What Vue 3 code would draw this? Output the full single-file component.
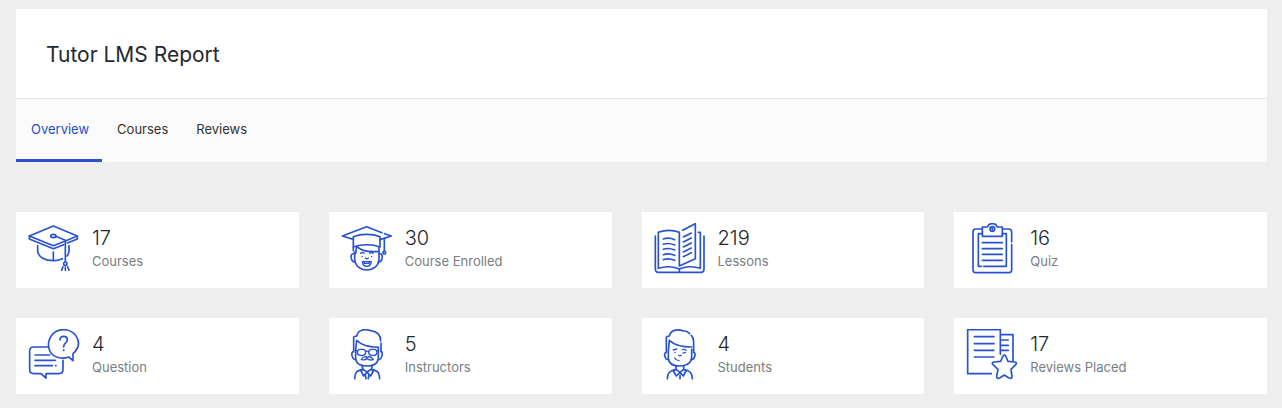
<script setup>
import { ref } from 'vue'

const tabs = ['Overview', 'Courses', 'Reviews']
const active = ref('Overview')

const stats = [
  { icon: 'cap', value: 17, label: 'Courses', box: '36 33 156 156' },
  { icon: 'graduate', value: 30, label: 'Course Enrolled', box: '33 33 156 156' },
  { icon: 'book', value: 219, label: 'Lessons', box: '36 33 156 156' },
  { icon: 'clipboard', value: 16, label: 'Quiz', box: '33 33 156 156' },
  { icon: 'question', value: 4, label: 'Question', box: '36 33 156 156' },
  { icon: 'instructor', value: 5, label: 'Instructors', box: '33 33 156 156' },
  { icon: 'student', value: 4, label: 'Students', box: '36 33 156 156' },
  { icon: 'review', value: 17, label: 'Reviews Placed', box: '33 33 156 156' },
]
</script>

<template>
  <main class="report">
    <header class="head">
      <h1>Tutor LMS Report</h1>
    </header>
    <nav class="tabs">
      <a
        v-for="tab in tabs"
        :key="tab"
        href="#"
        :class="{ active: tab === active }"
        @click.prevent="active = tab"
      >{{ tab }}</a>
    </nav>

    <section class="stats">
      <article v-for="s in stats" :key="s.label" class="card">
        <svg class="icon" :viewBox="s.box" aria-hidden="true">
          <g v-if="s.icon === 'cap'">
            <path d="M40 72 112 42 184 72 148 87 112 101Z" />
            <path d="M40 72V81L112 110 143 98M154 93 184 81V72" />
            <ellipse cx="112" cy="72" rx="8" ry="5" />
            <path d="M119 73 148 85V149" />
            <path d="M65 101V118C68 136 87 146 112 146 123 146 132 144 139 140M159 101V118C158 124 156 129 153 132M112 120V145" />
            <circle cx="148" cy="155" r="5" />
            <path d="M141 164 137 175M148 165V175M155 164 159 175" />
          </g>

          <g v-else-if="s.icon === 'graduate'">
            <path d="M70 82 37 72 110 44 156 62M164 65 184 72 150 83" />
            <path d="M70 105V74C94 65 127 65 150 74V105M70 105C94 96 127 96 150 105" />
            <path d="M163 79V116" />
            <circle cx="163" cy="122" r="4" />
            <path d="M70 105V116M74 120V140C75 163 92 174 110 174 129 174 146 163 147 140V106M77 124 80 103C92 115 113 121 146 118" />
            <path d="M71 125C63 126 62 132 64 140 66 147 70 150 76 150M149 125C157 126 158 132 156 140 154 147 150 150 145 150" />
            <g class="fine">
              <path d="M92 124C96 120 99 121 102 124M119 124C122 121 126 121 129 124M106 138C109 141 112 141 115 138" />
              <path d="M96 133V134M125 133V134" />
              <path d="M97 149H124C123 158 118 163 110 163 103 163 98 158 97 149ZM103 150V154H118V150" />
            </g>
          </g>

          <g v-else-if="s.icon === 'book'">
            <path d="M49 169V61C68 54 94 54 112 61V162L160 140V35L122 55" />
            <path d="M49 169C70 162 96 163 112 171 128 163 155 162 175 169V61H169M112 171V181" />
            <path d="M40 72V171Q40 181 49 181H177Q186 181 186 171V72" />
            <path d="M64 81C75 77 87 78 98 83M64 97C75 93 87 94 98 99M64 112C75 108 87 109 98 114M64 128C75 124 87 125 98 130M64 143C75 139 87 140 98 145" />
            <path d="M124 75 148 63M124 90 148 78M124 105 148 93M124 120 148 108M124 134 148 122" />
          </g>

          <g v-else-if="s.icon === 'clipboard'">
            <path d="M82 51H62Q54 51 54 59V173Q54 182 63 182H161Q170 182 170 173V98M170 90V60Q170 51 161 51H142" />
            <path d="M82 73V45H98C99 38 105 35 112 35 119 35 125 38 126 45H142V73Z" />
            <circle cx="112" cy="51" r="7" />
            <path d="M112 49V53" />
            <path d="M82 65H70V163H79M86 163H154V65H142" />
            <path d="M82 92H142M82 110H142M82 127H142M82 145H142" />
          </g>

          <g v-else-if="s.icon === 'question'">
            <path d="M171 128 158 117C138 125 113 119 102 100 92 80 99 54 119 41 140 29 168 35 181 55 192 73 188 92 171 107Z" />
            <path d="M132 66C132 58 137 55 143 55 149 55 154 59 154 65 154 70 151 74 147 77 144 80 143 82 143 87" />
            <circle class="solid" cx="143" cy="97" r="3" />
            <path d="M95 87H53Q41 87 41 99V154Q41 167 53 167H75L90 180V167H129Q141 167 141 154V127" />
            <path d="M57 111H101M57 127H118M57 143H109M119 143H120" />
          </g>

          <g v-else-if="s.icon === 'instructor'">
            <path d="M71 99V57Q72 54 80 54C84 35 103 32 122 38 139 40 152 50 152 69M153 75V100M77 97 80 67C96 82 113 86 145 88V123C142 138 129 144 111 144 93 144 80 139 77 124V97" />
            <path d="M71 101C65 101 65 107 66 113 68 121 70 125 77 125M153 101C158 101 157 107 156 113 154 121 152 125 145 125" />
            <g class="fine">
              <rect x="82" y="94" width="25" height="18" rx="9" />
              <rect x="116" y="94" width="25" height="18" rx="9" />
              <path d="M77 96 83 99M107 101Q112 98 116 101M141 99 146 96" />
              <path d="M111 118C105 114 98 117 94 125 102 126 109 125 111 121 114 125 121 127 130 125 126 117 118 114 111 118Z" />
            </g>
            <path d="M74 182C74 164 80 157 99 154L96 143M149 182C149 164 143 157 124 154L127 143M99 154 93 159 101 174 111 162 122 174 130 159 124 154M99 154 111 162 124 154M108 182 106 169 111 162 117 169 115 182" />
          </g>

          <g v-else-if="s.icon === 'student'">
            <path d="M73 102V58Q74 54 82 54C86 36 105 32 125 39 133 39 139 42 143 47M148 52C154 58 155 64 155 71V102M79 101 82 67C98 82 119 87 149 87M149 94V120C148 136 131 144 114 144 96 144 80 138 79 121V101" />
            <path d="M73 103C67 104 67 110 69 116 70 122 74 125 79 124M155 103C160 104 160 110 158 116 156 122 153 125 148 124" />
            <g class="fine">
              <path d="M94 96 104 93M122 95Q127 93 132 97M99 103V104M123 105Q127 103 130 104M110 112Q114 115 118 112M98 120C101 125 105 128 111 128" />
            </g>
            <path d="M76 182C76 164 84 157 102 154V144M151 182C151 164 143 157 125 154V144M102 154 94 159 103 174 114 163 124 174 132 159 125 154M102 154 114 163 125 154M114 172V182" />
          </g>

          <g v-else>
            <path d="M109 167H38V35H136V109M136 50H174V129" />
            <path d="M58 56H117M58 77H117M58 97H117M58 117H117M137 66H160M137 82H160M137 97H160" />
            <path d="M144 114Q148 108 152 114L159 130 179 132Q188 134 182 140L168 154 171 175Q171 184 162 180L148 171 134 180Q125 184 125 175L129 154 114 140Q108 134 117 132L137 130Z" />
          </g>
        </svg>
        <div class="text">
          <div class="value">{{ s.value }}</div>
          <div class="label">{{ s.label }}</div>
        </div>
      </article>
    </section>
  </main>
</template>

<style>
body {
  background: #eeeeee;
}
</style>

<style scoped>
.report {
  padding: 9px 15px 14px 16px;
  font-family: Inter, "Liberation Sans", sans-serif;
  color: #23282d;
}

.head {
  padding: 31px 30px 29px;
  background: #fff;
  border-bottom: 1px solid #e5e5e5;
}

h1 {
  margin: 0;
  font-size: 21px;
  line-height: 29px;
  font-weight: 400;
}

.tabs {
  display: flex;
  background: #fbfbfb;
}

.tabs a {
  padding: 20px 13px 20px 15px;
  border-bottom: 3px solid transparent;
  font-size: 13px;
  line-height: 20px;
  color: #333;
  text-decoration: none;
}

.tabs a.active {
  color: #1e4fd1;
  border-bottom-color: #2b51cc;
}

.stats {
  display: grid;
  grid-template-columns: repeat(4, 1fr);
  row-gap: 30px;
  margin-top: 50px;
}

.card {
  display: flex;
  align-items: center;
  gap: 12px;
  margin-right: 30px;
  padding: 11px 12px 13px;
  background: #fff;
}

.card:nth-child(4n) {
  margin-right: 0;
}

.icon {
  flex: none;
  width: 52px;
  height: 52px;
  fill: none;
  stroke: #2952d3;
  stroke-width: 5;
  stroke-linecap: round;
  stroke-linejoin: round;
}

.fine {
  stroke-width: 4;
}

.solid {
  fill: #2952d3;
  stroke: none;
}

.text {
  padding-bottom: 2px;
}

.value {
  font-size: 20px;
  line-height: 26px;
  font-weight: 300;
}

.label {
  font-size: 13px;
  line-height: 20px;
  color: #7a7d82;
}
</style>
